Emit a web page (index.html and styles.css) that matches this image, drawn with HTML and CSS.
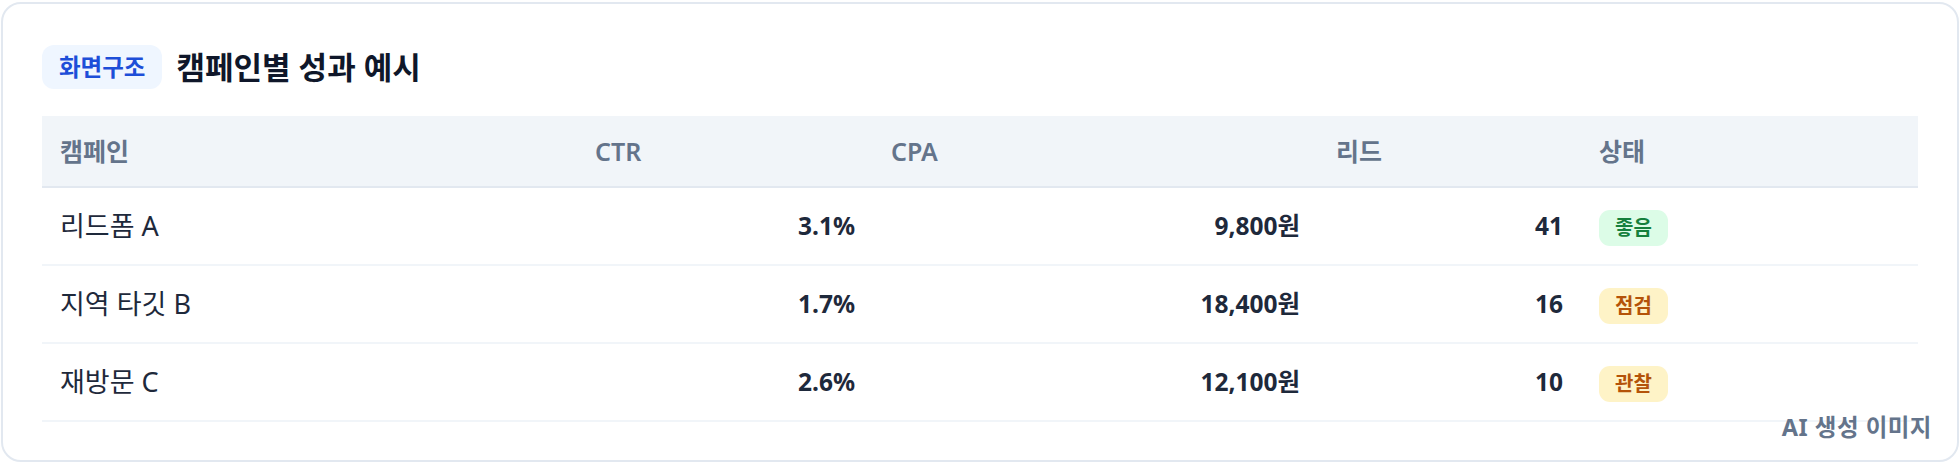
FILE: index.html
```html
<!DOCTYPE html>
<html lang="ko">
<head>
<meta charset="utf-8">
<title>캠페인별 성과 예시</title>
<link rel="stylesheet" href="styles.css">
</head>
<body>
<section class="card">
  <header class="title-row">
    <span class="tag">화면구조</span>
    <h1 class="title">캠페인별 성과 예시</h1>
  </header>
  <table class="perf">
    <colgroup>
      <col class="c-name">
      <col class="c-ctr">
      <col class="c-cpa">
      <col class="c-lead">
      <col class="c-status">
    </colgroup>
    <thead>
      <tr>
        <th>캠페인</th>
        <th>CTR</th>
        <th>CPA</th>
        <th>리드</th>
        <th>상태</th>
      </tr>
    </thead>
    <tbody>
      <tr>
        <td class="name">리드폼 A</td>
        <td class="num">3.1%</td>
        <td class="num">9,800원</td>
        <td class="num">41</td>
        <td><span class="pill good">좋음</span></td>
      </tr>
      <tr>
        <td class="name">지역 타깃 B</td>
        <td class="num">1.7%</td>
        <td class="num">18,400원</td>
        <td class="num">16</td>
        <td><span class="pill warn">점검</span></td>
      </tr>
      <tr>
        <td class="name">재방문 C</td>
        <td class="num">2.6%</td>
        <td class="num">12,100원</td>
        <td class="num">10</td>
        <td><span class="pill warn">관찰</span></td>
      </tr>
    </tbody>
  </table>
  <div class="watermark">AI 생성 이미지</div>
</section>
</body>
</html>
```

FILE: styles.css
```css
* { box-sizing: border-box; }

html, body {
  margin: 0;
  padding: 0;
  background: #ffffff;
}

body {
  font-family: "Noto Sans", "Noto Sans CJK KR", sans-serif;
  color: #1e293b;
}

.card {
  position: relative;
  margin: 2px 1px;
  height: 460px;
  border: 2px solid #e2e8f0;
  border-radius: 20px;
  padding: 41px 39px 0 39px;
  background: #ffffff;
}

.title-row {
  display: flex;
  align-items: center;
  gap: 14px;
  margin-bottom: 27px;
}

.tag {
  display: inline-block;
  background: #eff6ff;
  color: #1d4ed8;
  font-size: 23.5px;
  font-weight: 600;
  line-height: 30px;
  padding: 7px 17px;
  border-radius: 12px;
}

.title {
  margin: 0;
  font-size: 31px;
  font-weight: 700;
  line-height: 44px;
  color: #0f172a;
}

.perf {
  width: 1876px;
  border-collapse: collapse;
  table-layout: fixed;
}

.c-name { width: 535px; }
.c-ctr { width: 296px; }
.c-cpa { width: 445px; }
.c-lead { width: 263px; }
.c-status { width: 337px; }

.perf th {
  background: #f1f5f9;
  color: #64748b;
  font-size: 25px;
  font-weight: 600;
  text-align: left;
  line-height: 36px;
  padding: 17px 18px;
  border-bottom: 2px solid #e2e8f0;
}

.perf td {
  font-size: 24.5px;
  line-height: 36px;
  padding: 20px 18px;
  border-bottom: 2px solid #f1f5f9;
  color: #334155;
}

.perf td.name {
  font-size: 27px;
  color: #1e293b;
}

.perf td.num {
  text-align: right;
  font-weight: 700;
  color: #1e293b;
}

.pill {
  display: inline-block;
  font-size: 20px;
  font-weight: 700;
  line-height: 36px;
  padding: 0 16px;
  margin: 2px 0 -2px;
  border-radius: 11px;
  vertical-align: top;
}

.pill.good {
  background: #dcfce7;
  color: #15803d;
}

.pill.warn {
  background: #fef3c7;
  color: #b45309;
}

.watermark {
  position: absolute;
  right: 25px;
  bottom: 17px;
  font-size: 23.5px;
  font-weight: 700;
  color: #64748b;
  letter-spacing: 0.5px;
}
```
